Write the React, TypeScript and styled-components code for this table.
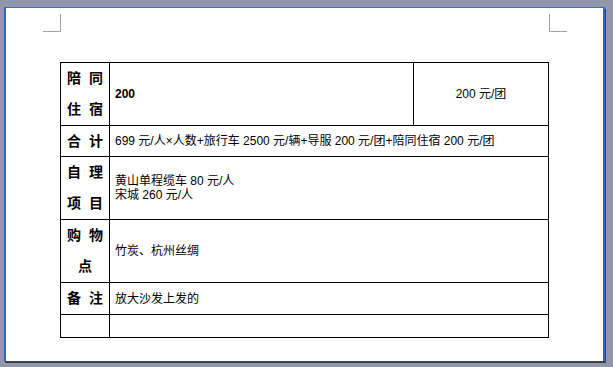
import React from 'react';
import styled, { createGlobalStyle } from 'styled-components';

const GlobalStyle = createGlobalStyle`
  html, body {
    margin: 0;
    padding: 0;
    background: #8f97a9;
  }
`;

const Frame = styled.div`
  width: 613px;
  height: 367px;
  box-sizing: border-box;
  padding: 7px 0 0 4px;
  background: #8f97a9;
  overflow: hidden;
`;

const Page = styled.div`
  width: 601px;
  height: 354px;
  box-sizing: border-box;
  background: #ffffff;
  border-top: 1px solid #3a6dcc;
  border-left: 2px solid #2f64c8;
  border-right: 2px solid #2f64c8;
  box-shadow: 1px 2px 0 0 #3c3f46;
  padding: 6px 0 0 37px;
`;

const CornerRow = styled.div`
  width: 524px;
  display: flex;
  justify-content: space-between;
`;

const CornerMark = styled.div<{ side: 'left' | 'right' }>`
  width: 18px;
  height: 18px;
  box-sizing: border-box;
  border-bottom: 1px solid #a3a3a3;
  border-${({ side }) => (side === 'left' ? 'right' : 'left')}: 1px solid #a3a3a3;
`;

const Sheet = styled.div`
  margin: 30px 0 0 17px;
  display: grid;
  grid-template-columns: 49px 304px 135px;
  grid-template-rows: 63px 31px 63px 63px 32px 23px;
  width: 489px;
  box-sizing: border-box;
  border-top: 1px solid #000;
  border-left: 1px solid #000;
  color: #000;
`;

const Cell = styled.div<{ span?: number }>`
  box-sizing: border-box;
  border-right: 1px solid #000;
  border-bottom: 1px solid #000;
  grid-column: span ${({ span }) => span || 1};
  display: flex;
  flex-direction: column;
  justify-content: center;
  min-width: 0;
`;

const LabelCell = styled(Cell)`
  align-items: center;
  font-family: 'Liberation Sans', 'Noto Sans CJK SC', sans-serif;
  font-weight: bold;
  font-size: 14px;
  line-height: 31px;
  word-spacing: 4px;
  white-space: nowrap;
`;

const ValueCell = styled(Cell)<{ align?: 'left' | 'center'; strong?: boolean }>`
  padding: 0 5px;
  font-family: 'Liberation Sans', 'Noto Sans CJK SC', sans-serif;
  font-size: 12px;
  line-height: 14px;
  font-weight: ${({ strong }) => (strong ? 'bold' : 'normal')};
  text-align: ${({ align }) => align || 'left'};
  white-space: nowrap;
`;

const Line = styled.div``;

const rows: { label: string[]; lines: string[] }[] = [
  { label: ['合 计'], lines: ['699 元/人×人数+旅行车 2500 元/辆+导服 200 元/团+陪同住宿 200 元/团'] },
  { label: ['自 理', '项 目'], lines: ['黄山单程缆车 80 元/人', '宋城 260 元/人'] },
  { label: ['购 物', '点'], lines: ['竹炭、杭州丝绸'] },
  { label: ['备 注'], lines: ['放大沙发上发的'] },
  { label: [], lines: [] },
];

export default function App() {
  return (
    <>
      <GlobalStyle />
      <Frame>
        <Page>
          <CornerRow>
            <CornerMark side="left" />
            <CornerMark side="right" />
          </CornerRow>
          <Sheet>
            <LabelCell>
              <Line>陪 同</Line>
              <Line>住 宿</Line>
            </LabelCell>
            <ValueCell strong>200</ValueCell>
            <ValueCell align="center">200 元/团</ValueCell>

            {rows.map((row, i) => (
              <React.Fragment key={i}>
                <LabelCell>
                  {row.label.map((l) => (
                    <Line key={l}>{l}</Line>
                  ))}
                </LabelCell>
                <ValueCell span={2}>
                  {row.lines.map((l) => (
                    <Line key={l}>{l}</Line>
                  ))}
                </ValueCell>
              </React.Fragment>
            ))}
          </Sheet>
        </Page>
      </Frame>
    </>
  );
}
